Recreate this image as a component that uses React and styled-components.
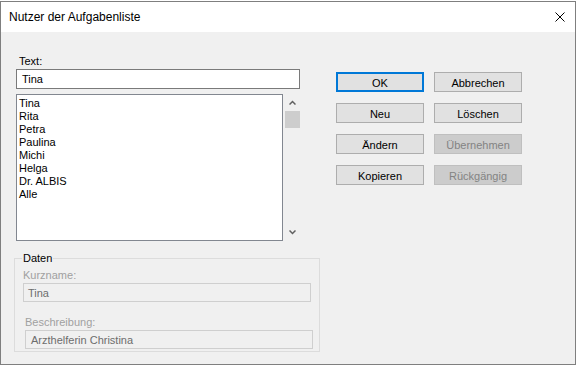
import React from "react";
import styled, { createGlobalStyle } from "styled-components";

const GlobalStyle = createGlobalStyle`
    body {
        margin: 0;
        background: #ffffff;
        font-family: "Liberation Sans", Arial, sans-serif;
    }
`

const Window = styled.div`
    box-sizing: border-box;
    width: 576px;
    height: 364px;
    margin-top: 1px;
    border: 1px solid #7f7f7f;
    display: flex;
    flex-direction: column;
    background: #f0f0f0;
`
const TitleBar = styled.div`
    height: 30px;
    background: #ffffff;
    display: flex;
    align-items: center;
    justify-content: space-between;
    padding: 0 9px 0 8px;
`
const Title = styled.span`
    font-family: "Liberation Sans", Arial, sans-serif;
    font-size: 12px;
    color: #000;
`
const CloseButton = styled.svg`
    width: 10px;
    height: 10px;
    margin-right: 1px;
`
const Body = styled.div`
    flex: 1;
    display: flex;
    padding: 23px 0 0 13px;
    font-size: 11px;
    color: #000;
`
const LeftSide = styled.div`
    width: 306px;
    display: flex;
    flex-direction: column;
`
const TopArea = styled.div`
    padding-left: 2px;
    width: 284px;
`
const Label = styled.div`
    line-height: 13px;
    height: 13px;
    margin-bottom: 1px;
    padding-left: 3px;
    color: ${p => (p.disabled ? "#a0a0a0" : "#000")};
    margin-left: ${p => p.shift || 0}px;
    margin-top: ${p => p.top || 0}px;
`
const TextInput = styled.div`
    box-sizing: border-box;
    height: ${p => p.h || 20}px;
    border: 1px solid ${p => (p.disabled ? "#cfcfcf" : "#7a7a7a")};
    background: ${p => (p.disabled ? "#f0f0f0" : "#ffffff")};
    color: ${p => (p.disabled ? "#6d6d6d" : "#000")};
    display: flex;
    align-items: center;
    padding-left: ${p => p.pad || 5}px;
    margin-left: ${p => p.shift || 0}px;
    margin-right: ${p => -(p.shift || 0)}px;
`
const ListRow = styled.div`
    display: flex;
    gap: 2px;
    margin-top: 5px;
`
const ListBox = styled.div`
    box-sizing: border-box;
    width: 267px;
    height: 147px;
    border: 1px solid #828790;
    background: #ffffff;
    padding: 2px 0 0 2px;
`
const ListItem = styled.div`
    line-height: 13px;
    height: 13px;
    white-space: nowrap;
`
const ScrollBar = styled.div`
    width: 15px;
    height: 147px;
    display: flex;
    flex-direction: column;
`
const ArrowBox = styled.div`
    height: 17px;
    display: flex;
    align-items: center;
    justify-content: center;
`
const Thumb = styled.div`
    height: 17px;
    background: #cdcdcd;
`
const Track = styled.div`
    flex: 1;
`
const GroupBox = styled.fieldset`
    box-sizing: border-box;
    margin: 10px 0 0 0;
    width: 306px;
    height: 101px;
    border: 1px solid #dcdcdc;
    padding: 0 8px 4px 8px;
    min-width: 0;
`
const Legend = styled.legend`
    padding: 0 1px;
    margin-left: -1px;
    line-height: 14px;
    color: #000;
`
const ButtonGrid = styled.div`
    display: grid;
    grid-template-columns: 88px 88px;
    grid-auto-rows: 20px;
    column-gap: 10px;
    row-gap: 11px;
    margin: 17px 0 0 16px;
    align-content: start;
`
const Button = styled.div`
    box-sizing: border-box;
    display: flex;
    align-items: center;
    justify-content: center;
    background: ${p => (p.disabled ? "#cccccc" : "#e1e1e1")};
    border: ${p => (p.primary ? "2px solid #0078d7" : p.disabled ? "1px solid #bfbfbf" : "1px solid #adadad")};
    color: ${p => (p.disabled ? "#838383" : "#000")};
    padding-top: 1px;
`

const Chevron = ({ up }) => (
    <svg width="7" height="5" viewBox="0 0 7 5">
        <polyline
            points={up ? "0.5,4.5 3.5,1.5 6.5,4.5" : "0.5,0.5 3.5,3.5 6.5,0.5"}
            fill="none"
            stroke="#606060"
            strokeWidth="1.5"
        />
    </svg>
)

const names = ["Tina", "Rita", "Petra", "Paulina", "Michi", "Helga", "Dr. ALBIS", "Alle"]

const App = () => (
    <>
        <GlobalStyle />
        <Window>
            <TitleBar>
                <Title>Nutzer der Aufgabenliste</Title>
                <CloseButton viewBox="0 0 10 10">
                    <path d="M0.5 0.5 L9.5 9.5 M9.5 0.5 L0.5 9.5" stroke="#000" strokeWidth="1" />
                </CloseButton>
            </TitleBar>
            <Body>
                <LeftSide>
                    <TopArea>
                        <Label>Text:</Label>
                        <TextInput>Tina</TextInput>
                        <ListRow>
                            <ListBox>
                                {names.map(n => <ListItem key={n}>{n}</ListItem>)}
                            </ListBox>
                            <ScrollBar>
                                <ArrowBox><Chevron up /></ArrowBox>
                                <Thumb />
                                <Track />
                                <ArrowBox><Chevron /></ArrowBox>
                            </ScrollBar>
                        </ListRow>
                    </TopArea>
                    <GroupBox>
                        <Legend>Daten</Legend>
                        <Label disabled top={4} shift={-3}>Kurzname:</Label>
                        <TextInput disabled h={19} pad={4}>Tina</TextInput>
                        <Label disabled top={14} shift={-1}>Beschreibung:</Label>
                        <TextInput disabled h={19} pad={5} shift={2}>Arzthelferin Christina</TextInput>
                    </GroupBox>
                </LeftSide>
                <ButtonGrid>
                    <Button primary>OK</Button>
                    <Button>Abbrechen</Button>
                    <Button>Neu</Button>
                    <Button>Löschen</Button>
                    <Button>Ändern</Button>
                    <Button disabled>Übernehmen</Button>
                    <Button>Kopieren</Button>
                    <Button disabled>Rückgängig</Button>
                </ButtonGrid>
            </Body>
        </Window>
    </>
)

export default App;
